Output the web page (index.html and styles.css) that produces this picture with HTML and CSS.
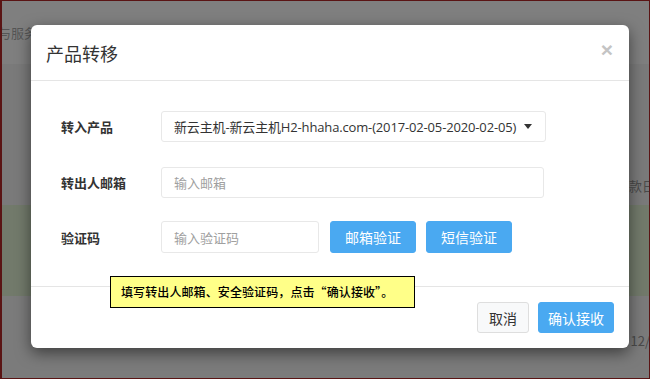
FILE: index.html
```html
<!DOCTYPE html>
<html lang="zh-CN">
<head>
<meta charset="utf-8">
<title>产品转移</title>
<link rel="stylesheet" href="styles.css">
</head>
<body>
<div class="page">
  <div class="band band-top"><span class="bg-text nav-text">与服务</span></div>
  <div class="band band-mid"><span class="bg-text right-text">款日</span></div>
  <div class="band band-green"></div>
  <div class="band band-bottom"><span class="bg-text right-text date-text">12/</span></div>

  <div class="modal">
    <div class="modal-header">
      <h4 class="modal-title">产品转移</h4>
      <span class="close">×</span>
    </div>
    <div class="modal-body">
      <div class="form-row">
        <label class="form-label">转入产品</label>
        <div class="select">
          <span class="select-text">新云主机-新云主机H2-hhaha.com-(2017-02-05-2020-02-05)</span>
          <span class="caret"></span>
        </div>
      </div>
      <div class="form-row">
        <label class="form-label">转出人邮箱</label>
        <div class="input input-email"><span class="placeholder">输入邮箱</span></div>
      </div>
      <div class="form-row form-row-code">
        <label class="form-label">验证码</label>
        <div class="input input-code"><span class="placeholder">输入验证码</span></div>
        <button class="btn btn-primary btn-verify">邮箱验证</button>
        <button class="btn btn-primary btn-verify">短信验证</button>
      </div>
    </div>
    <div class="modal-footer">
      <button class="btn btn-default">取消</button>
      <button class="btn btn-primary btn-confirm">确认接收</button>
    </div>
  </div>

  <div class="tip">填写转出人邮箱、安全验证码，点击“确认接收”。</div>
</div>
</body>
</html>
```

FILE: styles.css
```css
* { box-sizing: border-box; }
html, body { margin: 0; padding: 0; }
body {
  width: 650px;
  height: 379px;
  overflow: hidden;
  font-family: "Open Sans", "Noto Sans CJK SC", sans-serif;
  font-size: 13px;
  color: #333;
}
.page {
  position: relative;
  width: 650px;
  height: 379px;
  border: 1px solid #5a1414;
  border-left-width: 2px;
  background: #7b7b7b;
  overflow: hidden;
  display: flex;
  flex-direction: column;
}
.band { position: relative; width: 100%; }
.band-top { height: 64px; background: #7f7f7f; border-bottom: 1px solid #7a7a7a; }
.band-mid { height: 140px; background: #7a7a7a; }
.band-green { height: 91px; background: #727a6b; }
.band-bottom { flex: 1; background: #7b7b7b; }
.bg-text {
  font-family: "Noto Sans CJK SC", sans-serif;
  color: #4a4a4a;
  font-size: 13px;
  line-height: 16px;
}
.nav-text { display: block; margin: 24px 0 0 -4px; color: #555; }
.right-text { display: block; text-align: right; margin: 113px -6px 0 0; }
.date-text { margin-top: 37px; margin-right: -1px; }

.modal {
  position: absolute;
  left: 29px;
  top: 24px;
  width: 598px;
  height: 323px;
  background: #fff;
  border-radius: 6px;
  box-shadow: 0 5px 15px rgba(0,0,0,0.5);
  display: flex;
  flex-direction: column;
}
.modal-header {
  height: 56px;
  flex: none;
  border-bottom: 1px solid #e5e5e5;
  display: flex;
  align-items: center;
  justify-content: space-between;
  padding: 0 15px;
}
.modal-title {
  margin: 0;
  font-family: "Noto Sans CJK SC", sans-serif;
  font-size: 18px;
  font-weight: 400;
  color: #333;
  line-height: 20px;
  padding-top: 1px;
}
.close {
  font-family: "Liberation Sans", sans-serif;
  font-size: 21px;
  font-weight: 700;
  color: #c4c4c4;
  line-height: 1;
  margin-right: 1px;
  margin-top: -6px;
}
.modal-body {
  height: 206px;
  flex: none;
  padding: 30px 0 0 30px;
  display: flex;
  flex-direction: column;
  gap: 25px;
  border-bottom: 1px solid #e5e5e5;
}
.form-row {
  display: flex;
  align-items: center;
  height: 31px;
}
.form-row-code { height: 32px; margin-top: -2px; }
.form-label {
  width: 100px;
  font-family: "Noto Sans CJK SC", sans-serif;
  font-weight: 700;
  font-size: 13px;
  color: #333;
}
.select, .input {
  height: 31px;
  border: 1px solid #e8e8e8;
  border-radius: 3px;
  display: flex;
  align-items: center;
  padding: 0 12px;
}
.input-code { height: 32px; }
.select { width: 385px; justify-content: space-between; }
.select-text { font-size: 13px; color: #333; white-space: nowrap; letter-spacing: -0.15px; }
.caret {
  width: 0; height: 0;
  border-left: 4px solid transparent;
  border-right: 4px solid transparent;
  border-top: 5px solid #333;
  margin-right: 1px;
}
.input-email { width: 383px; }
.input-code { width: 158px; }
.placeholder { font-family: "Noto Sans CJK SC", sans-serif; color: #a0a0a0; font-size: 13px; }
.btn {
  height: 31px;
  border-radius: 3px;
  font-family: "Noto Sans CJK SC", sans-serif;
  font-size: 14px;
  padding: 0;
  border: 1px solid transparent;
  cursor: pointer;
}
.btn-primary { background: #4aa9f1; color: #fff; border-color: #4aa9f1; }
.btn-verify { width: 86px; height: 32px; margin-left: 11px; }
.btn-verify + .btn-verify { margin-left: 10px; }
.btn-default { width: 52px; background: #f8f9fa; color: #333; border-color: #dedede; }
.btn-confirm { width: 76px; margin-left: 9px; }
.modal-footer {
  flex: 1;
  display: flex;
  justify-content: flex-end;
  align-items: flex-start;
  padding: 15px 15px 0 0;
}
.tip {
  position: absolute;
  left: 108px;
  top: 275px;
  width: 305px;
  height: 32px;
  background: #ffff88;
  border: 1px solid #000;
  font-family: "Noto Sans CJK SC", sans-serif;
  font-size: 12px;
  font-weight: 500;
  color: #000;
  line-height: 30px;
  padding-left: 10px;
  white-space: nowrap;
  letter-spacing: 0.1px;
}
```
